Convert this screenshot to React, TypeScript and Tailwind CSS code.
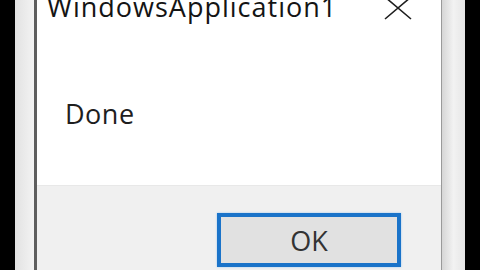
import React from "react";

export default function App() {
  return (
    <div
      className="w-[480px] h-[270px] bg-black flex overflow-hidden"
      style={{ fontFamily: '"Open Sans", "Noto Sans", sans-serif' }}
    >
      <div className="w-[15px] shrink-0 bg-black" />
      <div className="w-[19px] shrink-0 bg-gradient-to-r from-[#e2e2e2] to-[#f3f3f3]" />
      <div className="w-[3px] shrink-0 bg-[#5e5e5e]" />
      <div className="w-[404px] shrink-0 flex flex-col bg-white">
        <div className="h-[185px] shrink-0 flex flex-col">
          <div className="-mt-[7px] flex items-start pl-[10px]">
            <span className="text-[27px] leading-[27px] tracking-[1px] text-[#141414] whitespace-nowrap">
              WindowsApplication1
            </span>
            <svg
              className="ml-auto mr-[29px] mt-[3px]"
              width="28"
              height="24"
              viewBox="0 0 28 24"
            >
              <path d="M1 1 L27 23 M27 1 L1 23" stroke="#1e1e1e" strokeWidth="1.6" fill="none" />
            </svg>
          </div>
          <div className="mt-[80px] pl-[28px] text-[27px] leading-[27px] tracking-[0.5px] text-[#1e1e1e]">Done</div>
        </div>
        <div className="flex-1 bg-[#f0f0f0] border-t border-[#e8e8e8] pt-[27px] pl-[180px]">
          <div className="w-[184px] h-[54px] border-[4px] border-[#1a73c9] bg-[#e1e1e1] flex items-center justify-center shadow-[0_0_2px_#9cc8ef]">
            <span className="text-[27px] leading-[27px] text-[#333]">OK</span>
          </div>
        </div>
      </div>
      <div className="w-[1px] shrink-0 bg-[#9a9a9a]" />
      <div className="w-[23px] shrink-0 bg-gradient-to-r from-[#d6d6d6] via-[#f2f2f2] to-[#e6e6e6]" />
      <div className="flex-1 bg-black" />
    </div>
  );
}
